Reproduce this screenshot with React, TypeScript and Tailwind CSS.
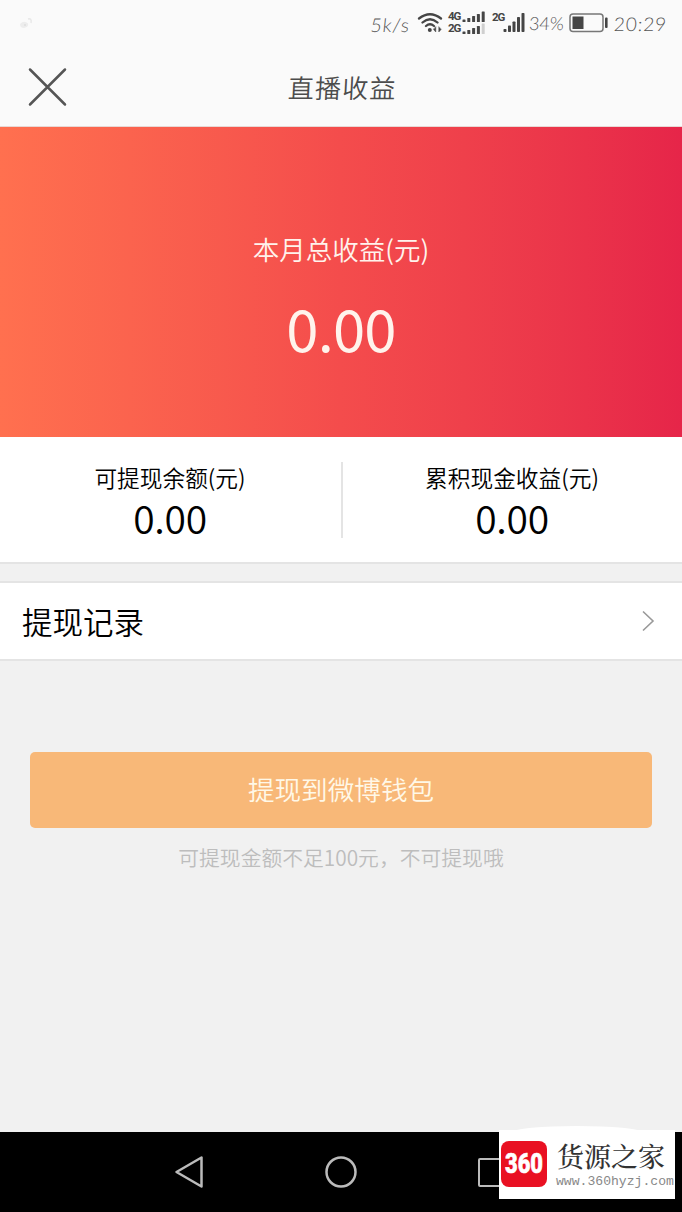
import React from "react";

function SignalBars({ heights, fadedLast }: { heights: number[]; fadedLast?: boolean }) {
  return (
    <svg width="24" height="12" viewBox="0 0 24 12" className="block">
      {heights.map((h, i) => (
        <rect
          key={i}
          x={1.5 + i * 4.8}
          y={11 - h}
          width="3"
          height={h}
          rx="0.6"
          fill={fadedLast && i === heights.length - 1 ? "#cfcfcf" : "#454545"}
        />
      ))}
    </svg>
  );
}

function StatusBar() {
  return (
    <div className="flex h-[46px] items-center text-[#555] font-['Lato','Noto_Sans',sans-serif] leading-none">
      <svg width="14" height="14" viewBox="0 0 14 14" className="ml-[19px] mt-px">
        <path d="M1 7Q5 3 9 6.500Q10 10 5 11Q1 11 1 7Z" fill="#ededed" />
        <path d="M9 2Q13 1 12 6" stroke="#e8e8e8" strokeWidth="1.500" fill="none" />
        <circle cx="6" cy="8" r="1" fill="#dedede" />
      </svg>
      <span className="ml-[338px] w-[46px] -skew-x-6 pt-[2px] text-[19px] font-light tracking-[0.800px]">5k/s</span>
      <svg width="26" height="24" viewBox="0 0 26 24" fill="none" stroke="#454545" strokeLinecap="round">
        <path d="M2 7.500Q13 -1 24 7.500M5.500 11.500Q13 5 20.500 11.500M9 15Q13 11.500 17 15" strokeWidth="2.300" />
        <circle cx="12.800" cy="19" r="2" fill="#454545" stroke="none" />
        <path d="M18.800 16v5l-2.300-2.500zM21.800 16v5l2.300-2.500z" fill="#454545" stroke="#454545" strokeWidth=".5" />
      </svg>
      <div className="ml-[5px] flex flex-col text-[#454545] font-['Roboto',sans-serif]">
        <div className="flex h-[12px] items-center">
          <span className="w-[13px] text-[11.500px] font-bold tracking-[-1.200px]">4G</span>
          <SignalBars heights={[2.5, 4, 6, 8, 10.5]} />
        </div>
        <div className="flex h-[12px] items-center">
          <span className="w-[13px] text-[11.500px] font-bold tracking-[-1.200px]">2G</span>
          <SignalBars heights={[2.5, 4, 6, 8, 10.5]} fadedLast />
        </div>
      </div>
      <div className="ml-[7px] flex h-[24px] text-[#454545] font-['Roboto',sans-serif]">
        <span className="w-[11px] pt-px text-[11.500px] font-bold tracking-[-1.200px]">2G</span>
        <svg width="22" height="24" viewBox="0 0 22 24" fill="#454545">
          <rect x="0.500" y="18" width="3" height="3" rx=".7" />
          <rect x="5" y="14.500" width="3" height="6.500" rx=".7" />
          <rect x="9.500" y="10.500" width="3" height="10.500" rx=".7" />
          <rect x="14" y="6" width="3" height="15" rx=".7" />
          <rect x="18.500" y="2" width="3" height="19" rx=".7" />
        </svg>
      </div>
      <span className="ml-[4px] w-[40px] -skew-x-3 text-[18px] font-light">34%</span>
      <svg width="40" height="22" viewBox="0 0 40 22" className="shrink-0">
        <rect x="1" y="2" width="33" height="17.500" rx="3" fill="none" stroke="#777" strokeWidth="1.500" />
        <rect x="3.500" y="4.500" width="11" height="12.500" fill="#454545" />
        <rect x="36" y="5.500" width="2.600" height="10.500" rx="1" fill="#454545" />
      </svg>
      <span className="ml-[5px] -skew-x-3 text-[19px] font-light tracking-[0.900px]">20:29</span>
    </div>
  );
}

function Balance({ label, value }: { label: string; value: string }) {
  return (
    <div className="flex flex-1 flex-col items-center pt-[26px] text-black">
      <div className="h-[27px] text-[22.700px] leading-[30px]">{label}</div>
      <div className="h-[54px] text-[39px] leading-[54px] tracking-[-0.300px]">{value}</div>
    </div>
  );
}

function NavigationBar() {
  return (
    <div className="flex h-[80px] items-center bg-black">
      <svg width="30" height="34" viewBox="0 0 30 34" fill="none" stroke="#bbb" strokeWidth="2.500" strokeLinejoin="round" className="ml-[174px]">
        <path d="M2.500 17L27.500 2.500V31.500Z" />
      </svg>
      <svg width="34" height="34" viewBox="0 0 34 34" fill="none" stroke="#bbb" strokeWidth="2.500" className="ml-[120px]">
        <circle cx="17" cy="17" r="14.500" />
      </svg>
      <div className="ml-[120px] h-[29px] w-[30px] rounded-xs border-[2.500px] border-[#bbb]" />
    </div>
  );
}

function Watermark() {
  return (
    <div className="absolute left-[499px] top-[1130px] flex h-[69px] w-[176px] items-center bg-white">
      <div className="absolute -top-[4px] left-[14px] h-[12px] w-[128px] rounded-[50%] bg-white" />
      <div className="relative -top-px ml-[2px] flex h-[46px] w-[46px] shrink-0 items-center justify-center rounded-[8px] bg-[#e91022]">
        <svg width="46" height="40" viewBox="0 0 46 40" className="overflow-visible">
          <text x="23" y="29" textAnchor="middle" textLength="38" lengthAdjust="spacingAndGlyphs" fontFamily="Roboto, sans-serif" fontWeight="900" fontSize="28" fill="white" stroke="white" strokeWidth="0.6">
            360
          </text>
        </svg>
      </div>
      <div className="relative ml-[9px]">
        <div className="h-[33px] whitespace-nowrap pl-px text-[27px] font-medium leading-[31px] text-[#333] font-['Noto_Serif_CJK_SC','Noto_Sans_CJK_SC',serif]">货源之家</div>
        <div className="h-[17px] whitespace-nowrap text-[13.100px] leading-[17px] text-[#888] font-['Liberation_Mono',monospace]">www.360hyzj.com</div>
      </div>
    </div>
  );
}

export default function App() {
  return (
    <div className="relative flex h-[1212px] w-[682px] flex-col overflow-hidden bg-[#f1f1f1] font-['Noto_Sans_CJK_SC',sans-serif] font-[350]">
      <header className="h-[127px] border-b border-[#e8d8d5] bg-[#fafafa]">
        <StatusBar />
        <div className="flex h-[81px] items-center">
          <svg width="42" height="42" viewBox="0 0 42 42" stroke="#555" strokeWidth="2.500" strokeLinecap="round" className="ml-[26px]">
            <path d="M4 3.500L39 38.500M39 3.500L4 38.500" />
          </svg>
          <h1 className="ml-[220px] -skew-x-3 text-[26px] font-[350] leading-[40px] tracking-[1.200px] text-[#4c4c4c]">直播收益</h1>
        </div>
      </header>
      <section className="flex h-[310px] flex-col items-center bg-linear-to-r from-[#ff704f] via-[#f44c4c] to-[#e62549] pt-[102px] text-[#fff3ec]">
        <div className="h-[40px] text-[26.500px] leading-[40px]">本月总收益(元)</div>
        <div className="mt-[18px] h-[80px] text-[58px] font-normal leading-[80px] tracking-[-0.800px]">0.00</div>
      </section>
      <section className="flex h-[127px] border-b-2 border-[#e4e4e4] bg-white">
        <Balance label="可提现余额(元)" value="0.00" />
        <div className="mt-[25px] h-[76px] w-[2px] translate-x-px bg-[#e4e4e4]" />
        <Balance label="累积现金收益(元)" value="0.00" />
      </section>
      <section className="mt-[17px] flex h-[80px] items-center justify-between border-y-2 border-[#e4e4e4] bg-white pl-[22px] pr-[27px]">
        <span className="text-[30.500px] leading-[40px] text-black">提现记录</span>
        <svg width="14" height="22" viewBox="0 0 14 22" fill="none" stroke="#999" strokeWidth="1.600">
          <path d="M2 1.500L12 11L2 20.500" />
        </svg>
      </section>
      <main className="flex flex-1 flex-col items-center pt-[91px]">
        <button className="h-[76px] w-[622px] rounded-[5px] bg-[#f8b878] pb-[2px] text-[26.600px] leading-[74px] text-[#fff8e8]">提现到微博钱包</button>
        <p className="mt-[14px] text-[20.800px] leading-[30px] text-[#bdbdbd]">可提现金额不足100元，不可提现哦</p>
      </main>
      <NavigationBar />
      <Watermark />
    </div>
  );
}
